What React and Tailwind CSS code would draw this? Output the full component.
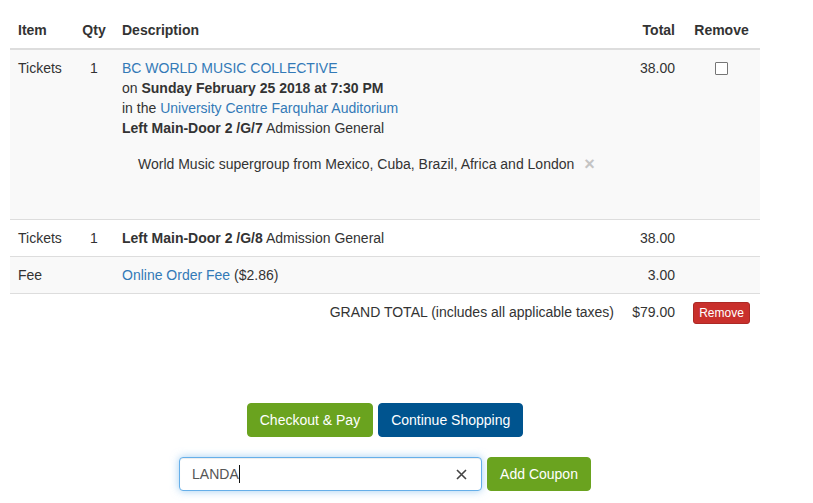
import React from 'react'

const LINK = 'text-[#337ab7]'

function Checkbox() {
  return <span className="inline-block w-[13px] h-[13px] border border-[#767676] bg-white rounded-[1px] mt-[4px]" />
}

export default function App() {
  return (
    <div className="min-h-screen bg-white text-[#333] text-[14px] leading-[20px] font-['Liberation_Sans',Arial,sans-serif]">
      <div className="w-[750px] ml-[10px] pt-[12px]">
        <table className="w-full table-fixed">
          <colgroup>
            <col className="w-[64px]" />
            <col className="w-[40px]" />
            <col />
            <col className="w-[61px]" />
            <col className="w-[77px]" />
          </colgroup>
          <thead>
            <tr className="border-b-2 border-[#ddd]">
              <th className="p-2 text-left font-bold align-bottom">Item</th>
              <th className="p-2 text-center font-bold align-bottom">Qty</th>
              <th className="p-2 text-left font-bold align-bottom">Description</th>
              <th className="p-2 text-right font-bold align-bottom">Total</th>
              <th className="p-2 text-center font-bold align-bottom">Remove</th>
            </tr>
          </thead>
          <tbody>
            <tr className="bg-[#f9f9f9]">
              <td className="p-2 align-top">Tickets</td>
              <td className="p-2 align-top text-center">1</td>
              <td className="p-2 align-top">
                <div className={LINK}>BC WORLD MUSIC COLLECTIVE</div>
                <div>on <b>Sunday February 25 2018 at 7:30 PM</b></div>
                <div>in the <span className={LINK}>University Centre Farquhar Auditorium</span></div>
                <div><b>Left Main-Door 2 /G/7</b> Admission General</div>
                <div className="ml-4 mt-[16px] mb-[37px] flex items-center">
                  <span>World Music supergroup from Mexico, Cuba, Brazil, Africa and London</span>
                  <span className="ml-[10px] text-[18px] leading-[20px] font-bold text-[#c4c4c4]">×</span>
                </div>
              </td>
              <td className="p-2 align-top text-right">38.00</td>
              <td className="p-2 align-top text-center"><Checkbox /></td>
            </tr>
            <tr className="border-t border-[#ddd]">
              <td className="p-2 align-top">Tickets</td>
              <td className="p-2 align-top text-center">1</td>
              <td className="p-2 align-top"><b>Left Main-Door 2 /G/8</b> Admission General</td>
              <td className="p-2 align-top text-right">38.00</td>
              <td className="p-2 align-top"></td>
            </tr>
            <tr className="border-t border-[#ddd] bg-[#f9f9f9]">
              <td className="p-2 align-top">Fee</td>
              <td className="p-2 align-top"></td>
              <td className="p-2 align-top"><span className={LINK}>Online Order Fee</span> ($2.86)</td>
              <td className="p-2 align-top text-right">3.00</td>
              <td className="p-2 align-top"></td>
            </tr>
            <tr className="border-t border-[#ddd]">
              <td colSpan={3} className="p-2 align-top text-right">GRAND TOTAL (includes all applicable taxes)</td>
              <td className="p-2 align-top text-right">$79.00</td>
              <td className="p-2 align-top text-center">
                <span className="inline-block bg-[#c9302c] border border-[#ac2925] text-white text-[12px] leading-[18px] px-[5px] py-[1px] rounded-[3px]">Remove</span>
              </td>
            </tr>
          </tbody>
        </table>

        <div className="mt-[71px] flex justify-center gap-[5px]">
          <button className="bg-[#6aa31f] border border-[#6aa31f] text-white px-3 py-[6px] rounded-[4px] leading-[20px]">Checkout &amp; Pay</button>
          <button className="bg-[#00548f] border border-[#00548f] text-white px-3 py-[6px] rounded-[4px] leading-[20px]">Continue Shopping</button>
        </div>

        <div className="mt-[20px] flex justify-center gap-[5px]">
          <div className="w-[303px] h-[34px] border border-[#66afe9] rounded-[4px] bg-white flex items-center pl-[12px] pr-[14px] text-[#555] shadow-[inset_0_1px_1px_rgba(0,0,0,0.075),0_0_8px_rgba(102,175,233,0.6)]">
            <span>LANDA</span>
            <span className="inline-block w-[1px] h-[18px] bg-[#111]" />
            <span className="flex-1" />
            <svg width="11" height="11" viewBox="0 0 11 11" className="text-[#444]">
              <path d="M1 1L10 10M10 1L1 10" stroke="currentColor" strokeWidth="1.6" />
            </svg>
          </div>
          <button className="bg-[#6aa31f] border border-[#6aa31f] text-white px-3 py-[6px] rounded-[4px] leading-[20px]">Add Coupon</button>
        </div>
      </div>
    </div>
  )
}
